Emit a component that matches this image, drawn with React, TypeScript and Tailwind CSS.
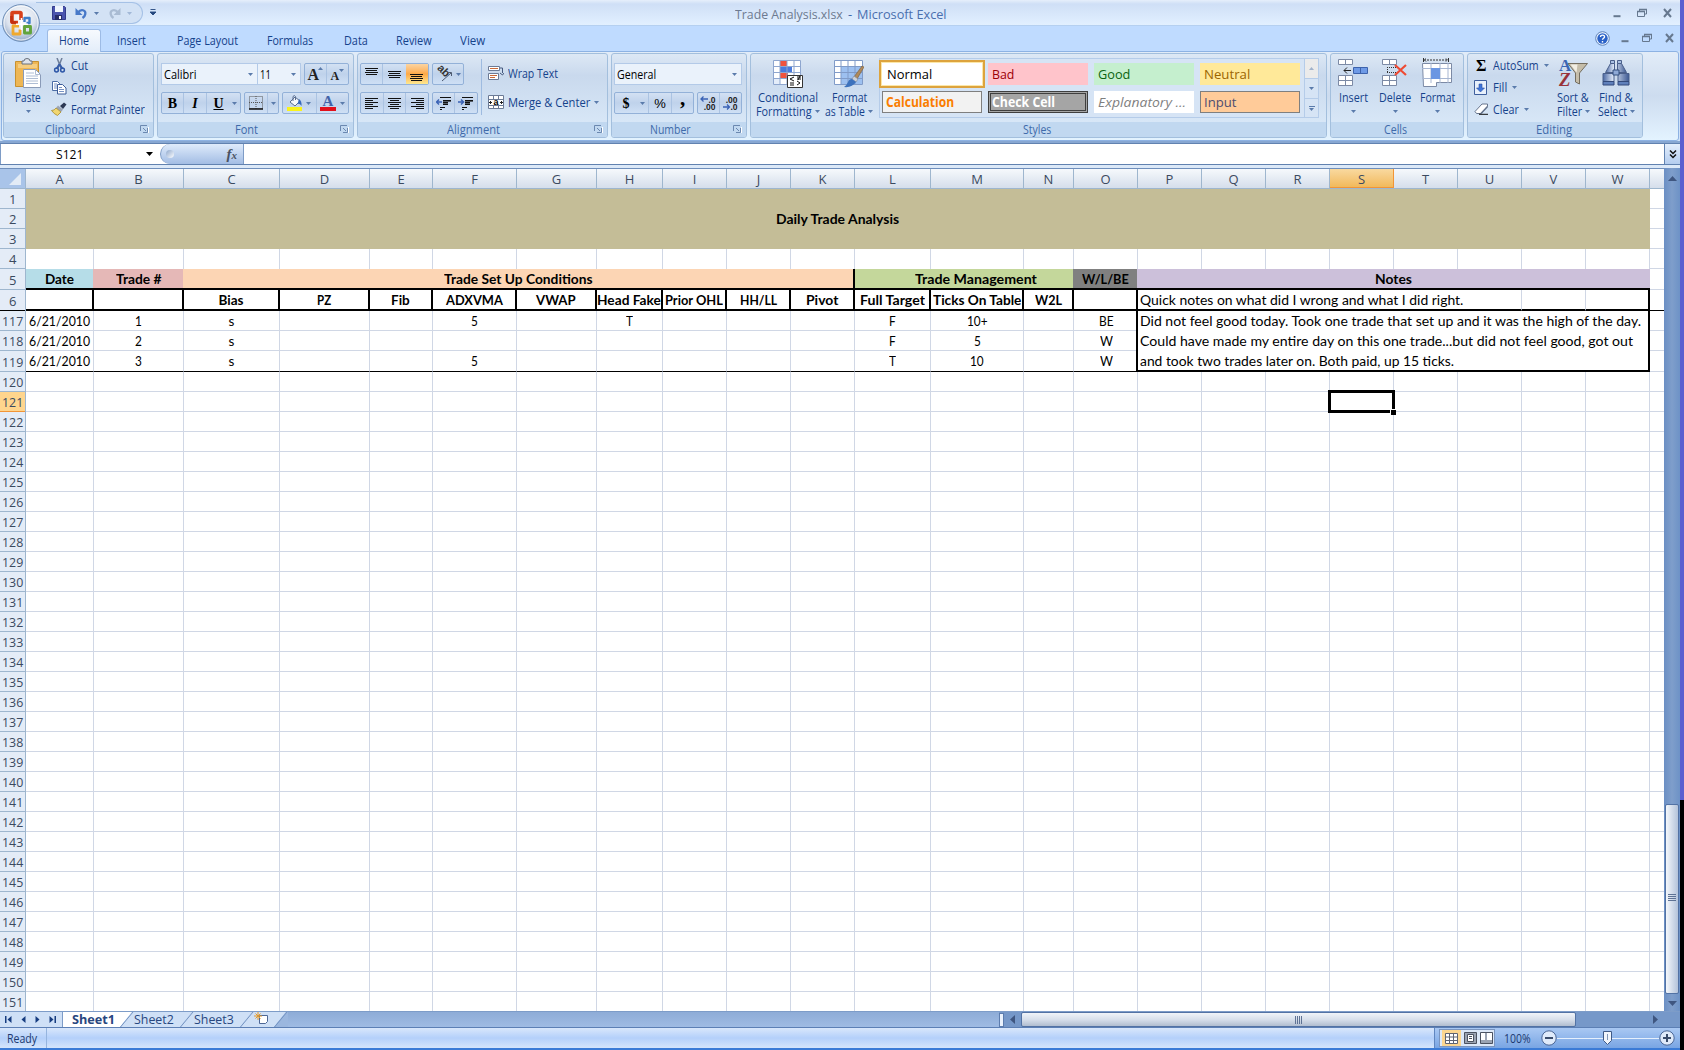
import { useLayoutEffect, useRef, useState } from "react";
import type { ReactNode } from "react";

/* text squeezed or stretched to a known width */
const Fit = ({ w, className = "", children }: { w: number; className?: string; children: string }) => {
  const ref = useRef<HTMLSpanElement>(null);
  const [scale, setScale] = useState(1);

  useLayoutEffect(() => {
    if (ref.current) setScale(w / ref.current.offsetWidth);
  }, [w, children]);

  return (
    <span className={`inline-block shrink-0 whitespace-pre text-left ${className}`} style={{ width: w }}>
      <span ref={ref} className="inline-block origin-left" style={{ transform: `scaleX(${scale})` }}>
        {children}
      </span>
    </span>
  );
};

const Caret = ({ className = "" }: { className?: string }) => (
  <svg width="5" height="3" viewBox="0 0 5 3" className={`shrink-0 ${className}`}>
    <path d="M0 0h5L2.5 3z" fill="#5a7bab" />
  </svg>
);

const Launcher = () => (
  <svg width="9" height="8" viewBox="0 0 9 8" className="absolute right-[4px] top-[3px]">
    <path d="M.5 6V.5H7" fill="none" stroke="#6b88b0" />
    <path d="M3 3l3 3M7.5 3v4.5H3" fill="none" stroke="#6b88b0" />
    <path d="M8.5 2v6" stroke="#fff" />
  </svg>
);

const Group = ({ title, titleW, className, launcher, children }: { title: string; titleW: number; className: string; launcher?: boolean; children: ReactNode }) => (
  <div className={`flex h-[85px] shrink-0 flex-col overflow-hidden rounded-[3px] border border-[#a3bfdd] bg-linear-to-b from-[#dde8f5] from-0% via-[#c9d9ed] via-26% to-[#dcebfa] ${className}`}>
    <div className="h-[68px]">{children}</div>
    <div className={`relative flex h-[15px] items-center justify-center bg-[#c1d8f0] ${launcher ? "pr-[18px]" : "pr-[3px]"}`}>
      <Fit w={titleW} className="text-[#3e6aaa]">{title}</Fit>
      {launcher && <Launcher />}
    </div>
  </div>
);

const box = "flex h-[22px] shrink-0 items-center rounded-[2px] border border-[#93b1d8] bg-linear-to-b from-[#d3e1f3] via-[#bfd2eb] to-[#cfe0f5]";
const slot = "flex h-full items-center justify-center border-[#abc3e2]";

const Big = ({ className, lines, widths, children }: { className: string; lines: string[]; widths: number[]; children: ReactNode }) => (
  <div className={`flex shrink-0 flex-col items-center text-[#15428b] ${className}`}>
    <div className="flex h-9 items-center justify-center">{children}</div>
    <Fit w={widths[0]} className="h-[13px] leading-[13px]">{lines[0]}</Fit>
    <div className="mt-px flex h-[13px] items-center gap-[3px]">
      {lines[1] && <Fit w={widths[1]} className="leading-[13px]">{lines[1]}</Fit>}
      <Caret />
    </div>
  </div>
);

/* horizontal strokes for the alignment buttons */
const Lines = ({ rows, color = "#111" }: { rows: number[][]; color?: string }) => (
  <svg width="15" height="14" viewBox="0 0 15 14">
    {rows.map(([x, y, w], i) => (
      <rect key={i} x={x} y={y} width={w} height="1" fill={color} />
    ))}
  </svg>
);

const OfficeButton = () => (
  <svg width="40" height="40" viewBox="0 0 40 40" className="absolute left-px top-[3px] z-20">
    <defs>
      <radialGradient id="orb" cx=".5" cy=".35" r=".65">
        <stop offset="0" stopColor="#ffffff" />
        <stop offset=".6" stopColor="#dce3ee" />
        <stop offset="1" stopColor="#8fa6c6" />
      </radialGradient>
    </defs>
    <circle cx="20" cy="20" r="18.4" fill="url(#orb)" stroke="#6f8fb8" />
    <circle cx="20" cy="20" r="17" fill="none" stroke="#fff" opacity=".8" />
    <g fill="none" strokeLinejoin="round">
      <path d="M20 17v-6.500q0-1-1-1h-7q-1 0-1 1v8q0 1 1 1h5" stroke="#d8401b" strokeWidth="3.600" />
      <path d="M10.500 13v5.500q0 1 1 1h4" stroke="#c22f12" strokeWidth="2.600" />
      <path d="M23.500 19v-4h5v5h-3" stroke="#3f7fc9" strokeWidth="2.400" />
      <path d="M18 23h-6v8h7v-4.500" stroke="#f0a92d" strokeWidth="2.800" />
      <path d="M23.500 23.500h6v6.500h-6z" stroke="#61a43c" strokeWidth="2.900" />
    </g>
    <path d="M20.500 15v12M15 21.200h12" stroke="#fff" strokeWidth="1.500" />
  </svg>
);

const Undo = ({ color, flip }: { color: string; flip?: boolean }) => (
  <svg width="13" height="13" viewBox="0 0 13 13" className={flip ? "-scale-x-100" : ""}>
    <path d="M3 5.500C6 1.500 11 3 10.300 7 10 9 9 10 7.500 11" fill="none" stroke={color} strokeWidth="2.300" />
    <path d="M.5 1v7h7z" fill={color} />
  </svg>
);

const WindowButtons = ({ className, gap }: { className: string; gap: string }) => (
  <div className={`flex ${gap} ${className}`}>
    <svg width="8" height="12" viewBox="0 0 8 12"><path d="M.5 9.200h7" stroke="#66788f" strokeWidth="2" /></svg>
    <svg width="10" height="12" viewBox="0 0 10 12">
      <path d="M2.500 4V2.500h7V7H8M.5 4.500h7v5h-7z" fill="none" stroke="#66788f" />
      <path d="M0 4.500h8M2 2.500h8" stroke="#66788f" strokeWidth="1.500" />
    </svg>
    <svg width="9" height="12" viewBox="0 0 9 12"><path d="M1 2l7 8M8 2l-7 8" stroke="#66788f" strokeWidth="2" /></svg>
  </div>
);

const TitleBar = () => (
  <div className="flex h-[26px] shrink-0 border-b border-[#b5d0f0] bg-linear-to-b from-[#e6effb] from-0% via-[#cfdff6] via-16% to-[#e2f0ff]">
    <div className="ml-[36px] mt-[2px] flex h-[22px] w-[107px] items-center rounded-r-full border border-l-0 border-[#a5c1e6] bg-[#d3e2f5] pl-4">
      <svg width="14" height="14" viewBox="0 0 14 14">
        <path d="M.5.5h12l1 1v12H.5z" fill="#4a54ae" stroke="#333b8c" />
        <path d="M3 0h8v6H3z" fill="#eef4fd" />
        <path d="M3 9h7v5H3z" fill="#272d68" />
        <path d="M7 10h2v3H7z" fill="#fff" />
      </svg>
      <span className="ml-[9px] flex"><Undo color="#4778c8" /></span>
      <Caret className="ml-1.5" />
      <span className="ml-[9px] flex"><Undo color="#a9bbd3" flip /></span>
      <Caret className="ml-1.5 opacity-40" />
    </div>
    <svg width="6" height="7" viewBox="0 0 6 7" className="ml-[7px] mt-[9px]">
      <path d="M.5.5h5M0 3h6L3 6z" stroke="#24477e" fill="#24477e" strokeWidth=".9" />
    </svg>
    <div className="ml-[579px] flex gap-[5px] pt-[5px] text-[13px] leading-[19px]">
      <Fit w={108} className="text-[#6d7a90]">Trade Analysis.xlsx</Fit>
      <Fit w={4} className="text-[#3e6aaa]">-</Fit>
      <Fit w={90} className="text-[#4a6fae]">Microsoft Excel</Fit>
    </div>
    <WindowButtons className="ml-auto mr-[8px] mt-[7px]" gap="gap-[16px]" />
  </div>
);

const TabRow = () => (
  <div className="flex h-[25px] shrink-0 bg-[#bfdbff] text-[#15428b]">
    <div className="z-10 ml-[47px] mt-[3px] flex h-[23px] w-[54px] items-center justify-center rounded-t-[3px] border border-b-0 border-[#9dbbe5] bg-linear-to-b from-[#f7fafe] to-[#e3edf9] pb-[2px]">
      <Fit w={30}>Home</Fit>
    </div>
    <div className="flex items-center pt-[3px]">
      <Fit w={28.5} className="ml-[16px]">Insert</Fit>
      <Fit w={61} className="ml-[31px]">Page Layout</Fit>
      <Fit w={46} className="ml-[29px]">Formulas</Fit>
      <Fit w={23.500} className="ml-[31px]">Data</Fit>
      <Fit w={35.500} className="ml-[29px]">Review</Fit>
      <Fit w={25} className="ml-[28px]">View</Fit>
    </div>
    <svg width="15" height="15" viewBox="0 0 15 15" className="ml-auto mt-[5px]">
      <circle cx="7.500" cy="7.500" r="6.800" fill="#e8f2ff" stroke="#5f82b8" />
      <circle cx="7.500" cy="7.500" r="5.200" fill="#2b62c8" />
      <path d="M5.500 6c0-2.600 4.200-2.500 4 0-.1 1.300-2 1.300-2 2.700M7.500 10v1.400" fill="none" stroke="#fff" strokeWidth="1.400" />
    </svg>
    <WindowButtons className="ml-[11px] mr-[6px] mt-[6px]" gap="gap-[13px]" />
  </div>
);

const Clipboard = () => (
  <Group title="Clipboard" titleW={50} className="w-[151px]" launcher>
    <div className="flex h-full text-[#15428b]">
      <Big className="ml-[9px] w-[30px] pt-px" lines={["Paste"]} widths={[26]}>
        <svg width="28" height="31" viewBox="0 0 28 31">
          <path d="M1.500 3.500h23v25h-23z" fill="#eeb654" stroke="#c8912f" />
          <path d="M4 6h19v4H4z" fill="#f5cd80" />
          <path d="M8 6V3h2q0-2.500 3-2.500T16 3h2v3z" fill="#dfe3ea" stroke="#69717e" />
          <path d="M9.500 11.500h12l5 5v13h-17z" fill="#fff" stroke="#8a9bb8" />
          <path d="M21.500 11.500v5h5M12 15h8M12 18h12M12 20.500h12M12 23h12M12 25.500h12" fill="none" stroke="#aebdd4" />
        </svg>
      </Big>
      <div className="ml-[8px] flex flex-col pt-[1px]">
        <div className="flex h-[22px] items-center gap-[4px] pb-px">
          <svg width="16" height="16" viewBox="0 0 16 16">
            <path d="M6 0l4 10M11 0L7 10" stroke="#6f7f99" strokeWidth="1.500" />
            <path d="M8.500 6l3 5M8.500 6l-3 5" stroke="#3a5fa8" strokeWidth="2" />
            <circle cx="5.500" cy="12" r="1.900" fill="none" stroke="#2f58a8" strokeWidth="1.500" />
            <circle cx="11.500" cy="12" r="1.900" fill="none" stroke="#2f58a8" strokeWidth="1.500" />
          </svg>
          <Fit w={17}>Cut</Fit>
        </div>
        <div className="flex h-[21px] items-center gap-[4px]">
          <svg width="16" height="14" viewBox="0 0 16 14">
            <path d="M1.500.5h5l3 3v6h-8z" fill="#fff" stroke="#4b6ca5" />
            <path d="M6.500 3.500h5l3.500 3.500v6H6.500z" fill="#fff" stroke="#3c5c98" />
            <path d="M3 3h3M3 5h3M3 7h3M8 6.500h3M8 8.500h5M8 10.500h5" stroke="#7792c4" />
          </svg>
          <Fit w={25}>Copy</Fit>
        </div>
        <div className="flex h-[22px] items-center gap-[4px]">
          <svg width="16" height="14" viewBox="0 0 16 14">
            <path d="M9 4l4-3.500 2.500 2L12 7z" fill="#2d3954" />
            <path d="M7 3.500l5 4-2 2.500-5-4z" fill="#9ca5b5" />
            <path d="M5 6l5 4-3.500 3.500Q3 12 .5 8.500 3.500 8.500 5 6z" fill="#f1d671" stroke="#a68a2e" strokeWidth=".8" />
          </svg>
          <Fit w={74}>Format Painter</Fit>
        </div>
      </div>
    </div>
  </Group>
);

const FontGroup = () => (
  <Group title="Font" titleW={23} className="ml-[3px] w-[197px]" launcher>
    <div className="flex flex-col gap-[7px] pl-[3px] pt-[9px]">
      <div className="flex">
        <div className="flex h-[22px] w-[97px] items-center justify-between border border-[#b3cae8] bg-[#eaf2fb] pl-[2px] pr-1 text-black">
          <Fit w={33}>Calibri</Fit>
          <Caret />
        </div>
        <div className="flex h-[22px] w-[43px] items-center justify-between border border-l-0 border-[#b3cae8] bg-[#eaf2fb] pl-[2px] pr-1 text-black">
          <Fit w={11}>11</Fit>
          <Caret />
        </div>
        <div className={`${box} ml-[3px] w-[45px] font-bold text-[#222]`}>
          <div className={`${slot} w-[22px] border-r font-['Liberation_Serif'] text-[16px]`}>
            A<Caret className="-ml-px mb-3 rotate-180" />
          </div>
          <div className={`${slot} w-[22px] font-['Liberation_Serif'] text-[12px]`}>
            <span className="mt-1">A</span><Caret className="mb-2" />
          </div>
        </div>
      </div>
      <div className="flex font-['Liberation_Serif'] text-[14px] font-bold text-black">
        <div className={`${box} w-[80px]`}>
          <div className={`${slot} w-[22px] border-r`}>B</div>
          <div className={`${slot} w-[23px] border-r italic`}>I</div>
          <div className={`${slot} w-[23px] underline`}>U</div>
          <Caret className="ml-[2px]" />
        </div>
        <div className={`${box} ml-[3px] w-[35px]`}>
          <div className={`${slot} w-[23px] border-r`}>
            <svg width="14" height="14" viewBox="0 0 14 14">
              <path d="M.5.5h13v12H.5zM7 0v13M0 6.500h14" fill="none" stroke="#555" strokeDasharray="1 1" />
              <path d="M0 13h14" stroke="#111" strokeWidth="1.500" />
            </svg>
          </div>
          <Caret className="ml-[3px]" />
        </div>
        <div className={`${box} ml-[3px] w-[67px]`}>
          <div className={`${slot} w-[23px]`}>
            <svg width="16" height="16" viewBox="0 0 16 16">
              <path d="M0 12h15v4H0z" fill="#f9f31c" />
              <path d="M3 7l5-5 5 4-5 5z" fill="#f5f8fd" stroke="#5a6d8f" />
              <path d="M6 6V1.500q1.500-2 2.500 0V5" fill="none" stroke="#5a6d8f" />
              <path d="M12 4q3 2 2.500 7-2-3-4-2z" fill="#3769bb" />
            </svg>
          </div>
          <Caret />
          <div className={`${slot} ml-[5px] w-[22px] border-l`}>
            <svg width="16" height="16" viewBox="0 0 16 16" className="overflow-visible">
              <path d="M0 12h16v4H0z" fill="#e2101c" />
              <text x="8" y="10.500" textAnchor="middle" fontSize="15" fontWeight="bold" fontFamily="Liberation Serif" fill="#4363a8">A</text>
            </svg>
          </div>
          <Caret className="ml-[2px]" />
        </div>
      </div>
    </div>
  </Group>
);

const indent = [[4, 1, 11], [7, 4, 8], [7, 6, 5], [7, 8, 5], [4, 11, 5], [4, 13, 2]];

const Alignment = () => (
  <Group title="Alignment" titleW={53} className="ml-[3px] w-[251px]" launcher>
    <div className="flex pl-[2px]">
      <div className="flex flex-col gap-[7px] pt-[9px]">
        <div className="flex gap-[3px]">
          <div className={`${box} w-[69px]`}>
            <div className={`${slot} w-[23px] border-r`}><Lines rows={[[1, 1, 13], [2, 3, 11], [1, 5, 13], [2, 7, 11]]} /></div>
            <div className={`${slot} w-[23px]`}><Lines rows={[[1, 4, 13], [2, 6, 11], [1, 8, 13], [2, 10, 11]]} /></div>
            <div className={`${slot} w-[23px] bg-linear-to-b from-[#fbd4a0] via-[#fda945] to-[#fde88f]`}><Lines rows={[[1, 7, 13], [2, 9, 11], [1, 11, 13], [2, 13, 11]]} /></div>
          </div>
          <div className={`${box} w-[32px] gap-[3px] pl-1`}>
            <svg width="16" height="15" viewBox="0 0 16 15" className="overflow-visible">
              <text x="-2" y="6" transform="rotate(45 4 6)" fontSize="11" fontFamily="Liberation Sans" fontWeight="bold" fill="#333">ab</text>
              <path d="M5 14l9-8M11 5.500h3.500V9" fill="none" stroke="#4d5a70" />
            </svg>
            <Caret />
          </div>
        </div>
        <div className="flex gap-[3px]">
          <div className={`${box} w-[69px]`}>
            <div className={`${slot} w-[23px] border-r`}><Lines rows={[[1, 2, 13], [1, 4, 8], [1, 6, 13], [1, 8, 8], [1, 10, 13], [1, 12, 8]]} /></div>
            <div className={`${slot} w-[23px] border-r`}><Lines rows={[[1, 2, 13], [3, 4, 9], [1, 6, 13], [3, 8, 9], [1, 10, 13], [3, 12, 9]]} /></div>
            <div className={`${slot} w-[22px]`}><Lines rows={[[1, 2, 13], [6, 4, 8], [1, 6, 13], [6, 8, 8], [1, 10, 13], [6, 12, 8]]} /></div>
          </div>
          <div className={`${box} w-[46px]`}>
            {[0, 1].map((i) => (
              <div key={i} className={`${slot} w-[22px] ${i ? "" : "border-r"}`}>
                <svg width="16" height="15" viewBox="0 0 16 15">
                  {indent.map(([x, y, w], k) => (
                    <rect key={k} x={x} y={y} width={w} height={y === 4 || y === 6 ? 1.600 : 1} fill="#111" />
                  ))}
                  <path d={i ? "M0 6h5M3 3.500l2.500 2.500L3 8.500" : "M6 6H1M3 3.500L.5 6 3 8.500"} fill="none" stroke="#3a62b5" strokeWidth="1.500" />
                </svg>
              </div>
            ))}
          </div>
        </div>
      </div>
      <div className="ml-[3px] mt-[5px] h-[56px] w-px bg-[#9ebbe0]" />
      <div className="ml-[6px] flex flex-col gap-[7px] pt-[8px] text-[#15428b]">
        <div className="flex h-[22px] items-center gap-[4px]">
          <svg width="16" height="16" viewBox="0 0 16 16">
            <path d="M.5 1.500h11v4H.5zM.5 8.500h10v6H.5z" fill="#fff" stroke="#6c7b96" />
            <path d="M2 3.500h8M2 10.500h7M2 12.500h5" stroke="#c96a3a" />
            <path d="M12 3h2.500v5M12 8l2.500 2 1.500-2" fill="none" stroke="#45597e" />
          </svg>
          <Fit w={50}>Wrap Text</Fit>
        </div>
        <div className="flex h-[22px] items-center gap-[4px]">
          <svg width="16" height="15" viewBox="0 0 16 15">
            <path d="M.5.5h15v13H.5zM0 4.500h16M0 10.500h16M5.500 0v4M10.500 0v4M5.500 11v3M10.500 11v3" fill="#fff" stroke="#6c7b96" />
            <path d="M1 7.500h3M12 7.500h3M2.500 6v3M13.500 6v3" stroke="#222" />
            <text x="8" y="10" textAnchor="middle" fontSize="9" fontWeight="bold" fontFamily="Liberation Sans">a</text>
          </svg>
          <Fit w={82}>Merge &amp; Center</Fit>
          <Caret />
        </div>
      </div>
    </div>
  </Group>
);

const Decimal = ({ top, bottom, arrowTop }: { top: string; bottom: string; arrowTop?: boolean }) => (
  <svg width="16" height="16" viewBox="0 0 16 16">
    <g fontFamily="Liberation Sans" fontSize="8.500" fontWeight="bold" fill="#222" textAnchor="end">
      <text x="15.500" y="7.500">{top}</text>
      <text x="15.500" y="15">{bottom}</text>
    </g>
    <path d={arrowTop ? "M8 4H1M3.500 1.500L1 4l2.500 2.500" : "M1 12h6M5 9.500L7.500 12 5 14.500"} fill="none" stroke="#3a62b5" strokeWidth="1.300" />
  </svg>
);

const NumberGroup = () => (
  <Group title="Number" titleW={41} className="ml-[3px] w-[136px]" launcher>
    <div className="flex flex-col gap-[7px] pl-[2px] pt-[9px]">
      <div className="flex h-[22px] w-[128px] items-center justify-between border border-[#b3cae8] bg-[#eaf2fb] pl-[2px] pr-1 text-black">
        <Fit w={39}>General</Fit>
        <Caret />
      </div>
      <div className="flex gap-[3px]">
        <div className={`${box} w-[80px] text-black`}>
          <span className="w-[22px] text-center font-['Liberation_Serif'] text-[14px] font-bold">$</span>
          <Caret className="ml-[3px]" />
          <div className={`${slot} ml-[3px] w-[24px] border-x font-['Liberation_Sans'] text-[13px]`}>%</div>
          <span className="mb-[9px] ml-2 font-['Liberation_Serif'] text-[21px] font-bold leading-none">,</span>
        </div>
        <div className={`${box} w-[45px]`}>
          <div className={`${slot} w-[22px] border-r`}><Decimal top=".0" bottom=".00" arrowTop /></div>
          <div className={`${slot} w-[22px]`}><Decimal top=".00" bottom=".0" /></div>
        </div>
      </div>
    </div>
  </Group>
);

const Tile = ({ name, w, className }: { name: string; w: number; className: string }) => (
  <div className={`flex h-[22px] w-[100px] items-center text-[13.500px] ${className}`}>
    <Fit w={w}>{name}</Fit>
  </div>
);

const Styles = () => (
  <Group title="Styles" titleW={28} className="ml-[3px] w-[577px]">
    <div className="flex">
      <Big className="ml-[3px] w-[68px] pt-px" lines={["Conditional", "Formatting"]} widths={[60, 56]}>
        <svg width="30" height="29" viewBox="0 0 30 29">
          <path d="M.5 1.500h27v24H.5z" fill="#fff" />
          <path d="M7 1h7v7H7zM7 14h8v6H7z" fill="#f0533d" />
          <path d="M7 8h12v6H7z" fill="#4a7bdc" />
          <path d="M0 20h7v6H0z" fill="#e4edfa" />
          <path d="M.5 1.500h27v24H.5zM7 1v25M14 1v25M21 1v25M0 7.500h28M0 13.500h28M0 19.500h28" fill="none" stroke="#8ea6cf" />
          <path d="M14.500 16.500h15v12h-15z" fill="#fff" stroke="#333" />
          <path d="M21 18l-4 2 4 2M17 24h4M17 26h4M24 18h4M24 20h4M27 17l-2 4M24 22l3 2-3 2" fill="none" stroke="#111" />
        </svg>
      </Big>
      <Big className="ml-px w-[52px] pt-px" lines={["Format", "as Table"]} widths={[35, 40]}>
        <svg width="30" height="29" viewBox="0 0 30 29">
          <path d="M.5 1.500h28v24H.5z" fill="#fff" />
          <path d="M7 7h21v19H7z" fill="#9dc0f0" />
          <path d="M.5 1.500h28v24H.5zM7 1v25M14 1v25M21 1v25M0 7.500h28M0 13.500h28M0 19.500h28" fill="none" stroke="#809bc8" />
          <path d="M28 7l2 1-7 12-3-2z" fill="#b08a5c" stroke="#7b5c38" strokeWidth=".6" />
          <path d="M20 17l4 3-2 3-4-3z" fill="#ccd1da" stroke="#7d8696" strokeWidth=".6" />
          <path d="M18 20l4 3q-4 6-12 5 3-2 4-5 1-3 4-3z" fill="#3d72bd" />
        </svg>
      </Big>
      <div className="ml-[4px] mt-[4px] flex h-[60px] w-[440px] justify-between border border-[#b5cce9] bg-[#d6e4f5]">
        <div className="grid grid-cols-4 content-start gap-x-[6px] gap-y-[6px] pl-[2px] pt-[4px]">
          <Tile name="Normal" w={45} className="bg-white pl-[5px] text-black outline-2 outline-offset-1 outline-[#dda33d] ring-[3px] ring-[#fce7a8]" />
          <Tile name="Bad" w={22} className="bg-[#ffc4cb] pl-[4px] text-[#9c0006]" />
          <Tile name="Good" w={32} className="bg-[#c5efce] pl-[4px] text-[#0a6410]" />
          <Tile name="Neutral" w={46} className="bg-[#ffe999] pl-[4px] text-[#9c6500]" />
          <Tile name="Calculation" w={68} className="border border-[#7f7f7f] bg-[#f2f2f2] pl-[3px] font-bold text-[#fa7d00]" />
          <Tile name="Check Cell" w={63} className="border-[3px] border-double border-[#3f3f3f] bg-[#a5a5a5] pl-px font-bold text-white" />
          <Tile name="Explanatory ..." w={88} className="bg-white pl-[4px] italic text-[#7f7f7f]" />
          <Tile name="Input" w={32} className="border border-[#7f7f7f] bg-[#ffcb99] pl-[3px] text-[#4d4d70]" />
        </div>
        <div className="flex w-[14px] flex-col border-l border-[#b5cce9] text-center">
          <div className="flex h-5 items-center justify-center border-b border-[#b5cce9] bg-[#ebebeb]"><Caret className="rotate-180 opacity-50" /></div>
          <div className="flex h-5 items-center justify-center border-b border-[#b5cce9]"><Caret /></div>
          <div className="flex h-[18px] flex-col items-center justify-center gap-px"><i className="h-px w-[6px] bg-[#5a7bab]" /><Caret /></div>
        </div>
      </div>
    </div>
  </Group>
);

const cellsGrid = "M.5.500h14v5H.5zM7.500.500v5M.5 16.500h14v10H.5zM7.500 16.500v10M.5 21.500h14";

const Cells = () => (
  <Group title="Cells" titleW={23} className="ml-[3px] w-[134px]">
    <div className="flex pl-[3px] pt-px">
      <Big className="w-[38px]" lines={["Insert"]} widths={[28.700]}>
        <svg width="30" height="28" viewBox="0 0 30 28">
          <path d={cellsGrid} fill="#fff" stroke="#7c8aa5" />
          <path d="M15.500 8.500h14v6h-14zM22.500 8.500v6" fill="#6e9ae6" stroke="#3d63ac" />
          <path d="M13 11.500H6M9 8.500l-3 3 3 3" fill="none" stroke="#222" />
        </svg>
      </Big>
      <Big className="ml-[2px] w-[42px]" lines={["Delete"]} widths={[32]}>
        <svg width="26" height="28" viewBox="0 0 26 28">
          <path d={cellsGrid} fill="#fff" stroke="#7c8aa5" />
          <path d="M5 8.500h10M5 13.500h10M5.500 8v6" stroke="#333" strokeDasharray="1 1" />
          <path d="M13 6l11 10M24 6L13 16" stroke="#ee4b34" strokeWidth="2.200" />
        </svg>
      </Big>
      <Big className="w-[42px]" lines={["Format"]} widths={[35]}>
        <svg width="30" height="30" viewBox="0 0 30 30">
          <path d="M1.500 0v4M26.500 0v4" stroke="#333" />
          <path d="M2 2h24M4 .5L2.500 2 4 3.500M24 .5L25.500 2 24 3.500" fill="none" stroke="#333" strokeDasharray="2 1" />
          <path d="M.5 5.500h29v19h-15v4h-13z" fill="#fff" stroke="#7c8aa5" />
          <path d="M9 5v20M18 5v20M26 5v20M0 10.500h29M0 20.500h29" stroke="#a8b7d2" />
          <path d="M9 10h9v11H9z" fill="#6b96e2" />
        </svg>
      </Big>
    </div>
  </Group>
);

const Editing = () => (
  <Group title="Editing" titleW={36} className="ml-[3px] w-[176px]">
    <div className="flex">
      <div className="ml-[6px] flex w-[80px] flex-col pt-px text-[#15428b]">
        <div className="flex h-[22px] items-center pb-px">
          <span className="w-[19px] pl-[2px] font-['Liberation_Serif'] text-[16px] font-bold leading-none text-black">Σ</span>
          <Fit w={46}>AutoSum</Fit>
          <Caret className="ml-[5px]" />
        </div>
        <div className="flex h-[21px] items-center">
          <svg width="13" height="15" viewBox="0 0 13 15" className="mr-[6px]">
            <path d="M.5.5h12v14H.5z" fill="#e8f0fb" stroke="#3f5f9d" />
            <path d="M5 4h3v4h2.500l-4 4-4-4H5z" fill="#3f74d8" stroke="#2a52a5" strokeWidth=".6" />
          </svg>
          <Fit w={14}>Fill</Fit>
          <Caret className="ml-[5px]" />
        </div>
        <div className="flex h-[22px] items-center">
          <svg width="15" height="12" viewBox="0 0 15 12" className="mr-[4px]">
            <path d="M1 8.500L8 1h5.500v2.500L7 10.500H2.500z" fill="#fff" stroke="#66748d" />
            <path d="M7 10.500L13.500 3.500" stroke="#66748d" strokeWidth="1.500" />
            <path d="M5 11.300h9" stroke="#111" />
          </svg>
          <Fit w={26}>Clear</Fit>
          <Caret className="ml-[5px]" />
        </div>
      </div>
      <Big className="w-[38px] pt-px" lines={["Sort &", "Filter"]} widths={[32, 25]}>
        <svg width="30" height="30" viewBox="0 0 30 30" className="overflow-visible">
          <path d="M10 5.500h19.500L21.500 15v11l-4-2v-9z" fill="#c5bda9" stroke="#746e60" />
          <path d="M12.500 6.500h7l-1 8z" fill="#f2eee3" />
          <text x="1" y="13" fontFamily="Liberation Serif" fontWeight="bold" fontSize="17" fill="#3c67b4">A</text>
          <text x="1" y="28" fontFamily="Liberation Serif" fontWeight="bold" fontStyle="italic" fontSize="19" fill="#99323a">Z</text>
        </svg>
      </Big>
      <Big className="ml-[4px] w-[40px] pt-px" lines={["Find &", "Select"]} widths={[34, 29]}>
        <svg width="28" height="28" viewBox="0 0 28 28">
          <defs>
            <linearGradient id="barrel">
              <stop offset="0" stopColor="#4a68a3" />
              <stop offset=".4" stopColor="#dfe9f8" />
              <stop offset="1" stopColor="#3c5892" />
            </linearGradient>
          </defs>
          <path d="M8.500 4.500h4v9h-9zM19.500 4.500h-4v9h9z" fill="url(#barrel)" stroke="#4b608b" />
          <path d="M1 14.500h11v8H1zM16 14.500h11v8H16z" fill="url(#barrel)" stroke="#4b608b" />
          <path d="M1 22.500h11v3.500H1zM16 22.500h11v3.500H16z" fill="#5f80bb" stroke="#32497a" />
          <path d="M8.500 1.500h4v3h-4zM15.500 1.500h4v3h-4z" fill="#aac0e2" stroke="#4b608b" />
          <path d="M11 11h6v5h-6z" fill="#8ea9d6" stroke="#34507f" />
        </svg>
      </Big>
    </div>
  </Group>
);

const FormulaBar = () => (
  <div className="flex h-[22px] shrink-0 border-y border-[#6182b0] bg-white">
    <div className="flex w-[160px] items-center border-l border-[#7e9cc6] pl-[55px] text-[13px] text-black">
      <Fit w={27}>S121</Fit>
      <svg width="7" height="4" viewBox="0 0 7 4" className="ml-[63px]"><path d="M0 0h7L3.500 4z" /></svg>
    </div>
    <div className="flex w-[84px] items-center justify-between rounded-l-full border-l border-r border-[#7e9cc6] bg-linear-to-b from-[#dfebfb] to-[#a3bde4] pl-[5px] pr-[6px]">
      <i className="size-2 rounded-full bg-linear-to-br from-[#8fa8cc] to-white" />
      <span className="font-['Liberation_Serif'] text-[15px] font-bold italic leading-none text-[#4a5262]">f<span className="text-[11px]">x</span></span>
    </div>
    <div className="ml-auto flex w-[16px] items-center justify-center border-l border-[#6182b0] bg-linear-to-b from-[#e3eefc] to-[#b4cdef]">
      <svg width="8" height="9" viewBox="0 0 8 9"><path d="M1 .5l3 3 3-3M1 4.500l3 3 3-3" fill="none" stroke="#111" strokeWidth="1.500" /></svg>
    </div>
  </div>
);

const columns: [string, string][] = [
  ["A", "w-[68px]"], ["B", "w-[90px]"], ["C", "w-[96px]"], ["D", "w-[90px]"], ["E", "w-[63px]"], ["F", "w-[84px]"],
  ["G", "w-[80px]"], ["H", "w-[66px]"], ["I", "w-[64px]"], ["J", "w-[64px]"], ["K", "w-[64px]"], ["L", "w-[76px]"],
  ["M", "w-[93px]"], ["N", "w-[50px]"], ["O", "w-[64px]"], ["P", "w-[64px]"], ["Q", "w-[64px]"], ["R", "w-[64px]"],
  ["S", "w-[64px]"], ["T", "w-[64px]"], ["U", "w-[64px]"], ["V", "w-[64px]"], ["W", "w-[64px]"],
];

const tall = [5, 6, 119];
const rowNumbers = [1, 2, 3, 4, 5, 6, ...Array.from({ length: 35 }, (_, i) => 117 + i)];

const trades: Record<string, string>[] = [
  { A: "6/21/2010", B: "1", C: "s", F: "5", H: "T", L: "F", M: "10+", O: "BE" },
  { A: "6/21/2010", B: "2", C: "s", L: "F", M: "5", O: "W" },
  { A: "6/21/2010", B: "3", C: "s", F: "5", L: "T", M: "10", O: "W" },
];

const subHeads: Record<string, [string, number]> = {
  C: ["Bias", 25], D: ["PZ", 14.500], E: ["Fib", 19], F: ["ADXVMA", 57], G: ["VWAP", 40], H: ["Head Fake", 64], I: ["Prior OHL", 58],
  J: ["HH/LL", 37], K: ["Pivot", 32], L: ["Full Target", 65], M: ["Ticks On Table", 88], N: ["W2L", 27],
};

const cellW: Record<string, number> = { "6/21/2010": 61, "10+": 21, "10": 14, BE: 15, W: 13, "1": 7, "2": 7, "3": 7, "5": 7, s: 6, T: 7, F: 7 };

const EmptyRow = () => (
  <div className="flex h-5 shrink-0">
    {columns.map(([c, w]) => (
      <div key={c} className={`${w} shrink-0 border-b border-r border-[#d0d7e5]`} />
    ))}
    <div className="grow border-b border-[#d0d7e5]" />
  </div>
);

const Sheet = () => (
  <div className="flex h-[823px] overflow-hidden font-['Lato',sans-serif] text-[13.500px] text-black">
    <div className="flex w-[26px] shrink-0 flex-col border-r border-[#9eb6ce] bg-[#e4ecf7] font-['Open_Sans',sans-serif] text-[13px] text-[#3b4a60]">
      {rowNumbers.map((n) => (
        <div
          key={n}
          className={`flex shrink-0 items-center justify-center border-b pt-[2px] ${tall.includes(n) ? "h-[21px]" : "h-5"} ${n === 121 ? "border-[#f29536] bg-[#ffd58d]" : n === 6 ? "border-black" : "border-[#9eb6ce]"}`}
        >
          <Fit w={String(n).length * 7}>{String(n)}</Fit>
        </div>
      ))}
    </div>
    <div className="relative flex w-[1638px] shrink-0 flex-col bg-white">
      <div className="flex h-[60px] shrink-0">
        <div className="flex w-[1624px] items-center justify-center bg-[#c4bd97] pr-[2px] font-bold">
          <Fit w={123}>Daily Trade Analysis</Fit>
        </div>
        <div className="grow">
          {[1, 2, 3].map((r) => <div key={r} className="h-5 border-b border-[#d0d7e5]" />)}
        </div>
      </div>
      <div className="flex h-5 shrink-0">
        {columns.map(([c, w]) => (
          <div key={c} className={`${w} shrink-0 border-r border-[#d0d7e5]`} />
        ))}
        <div className="grow border-b border-[#d0d7e5]" />
      </div>
      <div className="flex h-[21px] shrink-0 font-bold">
        <div className="flex w-[67px] items-center justify-center border-b-2 border-black bg-[#b6dde8] pt-[2px]"><Fit w={29}>Date</Fit></div>
        <div className="flex w-[90px] items-center justify-center border-b-2 border-black bg-[#e5b8b7] pl-px pt-[2px]"><Fit w={46}>Trade #</Fit></div>
        <div className="flex w-[670px] items-center justify-center border-b-2 border-black bg-[#fcd5b4] pt-[2px]"><Fit w={149}>Trade Set Up Conditions</Fit></div>
        <div className="flex w-[220px] items-center justify-center border-b-2 border-l-2 border-black bg-[#c4d79b] pl-6 pt-[2px]"><Fit w={122}>Trade Management</Fit></div>
        <div className="flex w-[64px] items-center justify-center border-b-2 border-black bg-[#808080] pt-[2px]"><Fit w={47}>W/L/BE</Fit></div>
        <div className="flex w-[513px] items-center justify-center border-b-2 border-black bg-[#ccc0da] pt-[2px]"><Fit w={37}>Notes</Fit></div>
        <div className="grow border-b border-[#d0d7e5]" />
      </div>
      <div className="flex h-[21px] shrink-0 font-bold">
        {columns.slice(0, 15).map(([c, w]) => (
          <div key={c} className={`${w} flex shrink-0 items-center justify-center border-b-2 border-r-2 border-black pt-[2px]`}>
            {subHeads[c] && <Fit w={subHeads[c][1]}>{subHeads[c][0]}</Fit>}
          </div>
        ))}
        <div className="flex w-[384px] items-center border-b-2 border-r border-b-black border-r-[#d0d7e5] pl-[2px] pt-[2px] font-normal">
          <Fit w={323}>Quick notes on what did I wrong and what I did right.</Fit>
        </div>
        <div className="w-[64px] border-b-2 border-r border-b-black border-r-[#d0d7e5]" />
        <div className="w-[64px] border-b-2 border-r-2 border-black" />
        <div className="grow border-b border-black" />
      </div>
      <div className="flex h-[61px] shrink-0">
        <div className="w-[1110px]">
          {trades.map((t, i) => (
            <div key={i} className={`flex ${i === 2 ? "h-[21px]" : "h-5"}`}>
              {columns.slice(0, 15).map(([c, w]) => (
                <div key={c} className={`${w} flex shrink-0 items-center justify-center border-b border-r-[#d0d7e5] pt-px ${c === "O" ? "" : "border-r"} ${i === 2 ? "border-b-black" : "border-b-[#d0d7e5]"}`}>
                  {t[c] && <Fit w={cellW[t[c]]}>{t[c]}</Fit>}
                </div>
              ))}
            </div>
          ))}
        </div>
        <div className="flex w-[514px] flex-col border-x-2 border-b-2 border-black pl-[2px] leading-5">
          <Fit w={501}>Did not feel good today. Took one trade that set up and it was the high of the day.</Fit>
          <Fit w={493}>Could have made my entire day on this one trade...but did not feel good, got out</Fit>
          <Fit w={314}>and took two trades later on. Both paid, up 15 ticks.</Fit>
        </div>
        <div className="grow">
          {[1, 2, 3].map((r) => <div key={r} className={`border-b border-[#d0d7e5] ${r === 3 ? "h-[21px]" : "h-5"}`} />)}
        </div>
      </div>
      {rowNumbers.slice(9).map((n) => <EmptyRow key={n} />)}
      {/* active cell */}
      <div className="absolute left-[1302px] top-[201px] h-[23px] w-[67px] border-[3px] border-black">
        <i className="absolute -bottom-[5px] -right-[4px] size-[6px] border-l border-t border-white bg-black" />
      </div>
    </div>
  </div>
);

const ColumnHeads = () => (
  <div className="flex h-[21px] shrink-0 border-b border-t border-b-[#9eb6ce] border-t-[#6f8fbc] bg-linear-to-b from-[#f6f9fc] to-[#d5deeb] text-[13px] text-[#3b4a60]">
    <div className="flex w-[26px] items-end justify-end border-r border-[#9eb6ce] bg-[#a9c4e9] pb-[3px] pr-1">
      <svg width="12" height="12" viewBox="0 0 12 12"><path d="M12 0v12H0z" fill="#e2ebf6" /></svg>
    </div>
    {columns.map(([c, w]) => (
      <div key={c} className={`${w} flex shrink-0 items-center justify-center border-r pt-[2px] ${c === "S" ? "border-b border-[#f29536] bg-linear-to-b from-[#f9d99f] to-[#f1b95a]" : "border-[#9eb6ce]"}`}>
        {c}
      </div>
    ))}
  </div>
);

const VerticalScroll = () => (
  <div className="flex w-4 shrink-0 flex-col items-center bg-linear-to-r from-[#6b8fc4] via-[#7f9ecb] to-[#6d92c6]">
    <svg width="9" height="5" viewBox="0 0 9 5" className="mt-[8px] shrink-0"><path d="M0 5h9L4.500 0z" fill="#3f5680" /></svg>
    <div className="mt-[623px] flex h-[190px] w-[14px] shrink-0 flex-col items-center justify-center gap-px rounded-[2px] border border-[#5272a4] bg-linear-to-r from-[#f4f7fb] to-[#b4c3da] pb-[4px]">
      {[1, 2, 3, 4].map((n) => <i key={n} className="h-px w-2 bg-[#5e7294]" />)}
    </div>
    <svg width="9" height="5" viewBox="0 0 9 5" className="mt-[7px] shrink-0"><path d="M0 0h9L4.500 5z" fill="#3f5680" /></svg>
  </div>
);

const Slant = ({ left, right }: { left: string; right: string }) => (
  <svg width="15" height="15" viewBox="0 0 15 15" className="shrink-0">
    <path d="M0 0h13L1 15H0z" fill={left} />
    <path d="M15 0h-2L1 15h14z" fill={right} />
    <path d="M14 0L1.500 15" stroke="#7393c2" />
  </svg>
);

const SheetTabs = () => (
  <div className="flex h-[16px] shrink-0 border-t border-[#7d9cc8] bg-[#9bb7df] text-[13px] leading-[15px] text-[#28477f]">
    <div className="flex w-[63px] items-center gap-[9px] border-r border-[#7d9cc8] bg-[#cfe0f6] pl-[5px]">
      <svg width="7" height="7" viewBox="0 0 7 7"><path d="M0 0h1.500v7H0zM6.500 0v7L2.500 3.500z" fill="#163c80" /></svg>
      <svg width="5" height="7" viewBox="0 0 5 7"><path d="M4.500 0v7L.5 3.500z" fill="#163c80" /></svg>
      <svg width="5" height="7" viewBox="0 0 5 7"><path d="M.5 0v7l4-3.500z" fill="#163c80" /></svg>
      <svg width="7" height="7" viewBox="0 0 7 7"><path d="M5.500 0H7v7H5.500zM.5 0v7l4-3.500z" fill="#163c80" /></svg>
    </div>
    <div className="bg-white pl-[9px] font-bold"><Fit w={43}>Sheet1</Fit></div>
    <div className="w-[4px] bg-white" />
    <Slant left="#fff" right="#cfe0f6" />
    <div className="bg-[#cfe0f6]"><Fit w={40}>Sheet2</Fit></div>
    <div className="w-[5px] bg-[#cfe0f6]" />
    <Slant left="#cfe0f6" right="#cfe0f6" />
    <div className="bg-[#cfe0f6]"><Fit w={40}>Sheet3</Fit></div>
    <div className="w-[5px] bg-[#cfe0f6]" />
    <Slant left="#cfe0f6" right="#cfe0f6" />
    <div className="w-[19px] bg-[#cfe0f6]">
      <svg width="15" height="13" viewBox="0 0 15 13">
        <path d="M5.500 3.500h8v6l-2 2h-6z" fill="#fff" stroke="#4d6796" />
        <path d="M4 0v8M0 4h8M1.500 1.500l5 5M6.500 1.500l-5 5" stroke="#e39a2d" />
      </svg>
    </div>
    <Slant left="#cfe0f6" right="#9bb7df" />
    <div className="grow bg-linear-to-b from-[#8eacd7] to-[#9fbbe3]" />
    <div className="flex w-[681px] shrink-0 items-center bg-[#7698c9]">
      <div className="h-[14px] w-[5px] border border-[#5c7cae] bg-[#eaf2fd]" />
      <svg width="5" height="9" viewBox="0 0 5 9" className="ml-[6px]"><path d="M5 0v9L0 4.500z" fill="#3f5680" /></svg>
      <div className="ml-[6px] flex h-[15px] w-[555px] items-center justify-center gap-px rounded-[2px] border border-[#5272a4] bg-linear-to-b from-[#f0f4f9] via-[#d7dfeb] to-[#b1bdcf]">
        {[1, 2, 3, 4].map((n) => <i key={n} className="h-2 w-px bg-[#5e7294]" />)}
      </div>
      <svg width="5" height="9" viewBox="0 0 5 9" className="ml-[77px]"><path d="M0 0v9l5-4.500z" fill="#3f5680" /></svg>
    </div>
  </div>
);

const Zoom = ({ plus }: { plus?: boolean }) => (
  <svg width="16" height="16" viewBox="0 0 16 16" className="shrink-0">
    <circle cx="8" cy="8" r="7.200" fill="#dfeafa" stroke="#4c6796" />
    <path d={plus ? "M4 8h8M8 4v8" : "M4 8h8"} stroke="#3a4c6b" strokeWidth="2" />
  </svg>
);

const StatusBar = () => (
  <div className="flex h-[23px] shrink-0 border-b-2 border-t border-b-[#3b7bd6] border-t-[#5c7fb5] bg-linear-to-b from-[#d9e7fb] via-[#b4d0fa] to-[#d5e5fb] text-[#1c3a70]">
    <div className="flex w-[47px] items-center border-r border-[#95b4de] pl-[7px]"><Fit w={30}>Ready</Fit></div>
    <div className="ml-auto flex w-[246px] items-center border-l border-[#5f86c0] bg-linear-to-b from-[#a9c8f3] to-[#79a5e3]">
      <div className="ml-[4px] flex h-[18px] w-[56px] items-center justify-around border border-[#7a95bf] bg-[#dce8f8]">
        <span className="flex h-full w-[19px] items-center justify-center bg-[#fbd690]">
          <svg width="13" height="11" viewBox="0 0 13 11"><path d="M.5.500h12v10H.5zM4.500 0v11M8.500 0v11M0 4h13M0 7.500h13" fill="#fff" stroke="#5e6472" /></svg>
        </span>
        <svg width="13" height="12" viewBox="0 0 13 12"><path d="M.5.500h12v11H.5z" fill="#9aa3b2" stroke="#4b5260" /><path d="M3.500 2.500h6v7h-6z" fill="#fff" stroke="#4b5260" /><path d="M5 4.500h3M5 6.500h3" stroke="#4b5260" /></svg>
        <svg width="13" height="12" viewBox="0 0 13 12"><path d="M.5.500h12v11H.5z" fill="#9aa3b2" stroke="#4b5260" /><path d="M1 1h4v7H1zM7 1h5v7H7z" fill="#fff" /></svg>
      </div>
      <Fit w={27} className="ml-[9px]">100%</Fit>
      <span className="ml-[10px] flex"><Zoom /></span>
      <div className="flex w-[102px] items-center">
        <div className="h-px w-[46px] bg-[#e5effc]" />
        <svg width="9" height="14" viewBox="0 0 9 14"><path d="M.5.500h8v9l-4 4-4-4z" fill="#f1f5fb" stroke="#3f5a87" /><path d="M4.500 3v6" stroke="#8296b6" /></svg>
        <div className="h-px grow bg-[#e5effc]" />
      </div>
      <Zoom plus />
    </div>
  </div>
);

export default function App() {
  return (
    <div className="flex h-[1050px] w-[1684px] overflow-hidden bg-[#d4e3f5] font-['Open_Sans',sans-serif] text-[12px] leading-[15px]">
      <div className="relative flex w-[1680px] shrink-0 flex-col">
        <OfficeButton />
        <TitleBar />
        <TabRow />
        <div className="flex h-[92px] shrink-0 border-b-2 border-[#87a7d2] bg-[#cfe2f7] px-px">
          <div className="flex h-[90px] w-[1678px] rounded-[3px] border border-[#8db2e3] bg-linear-to-b from-[#e2ecf8] via-[#cddcef] to-[#e3f3ff] pl-px pt-px">
            <Clipboard />
            <FontGroup />
            <Alignment />
            <NumberGroup />
            <Styles />
            <Cells />
            <Editing />
          </div>
        </div>
        <FormulaBar />
        <div className="h-[3px] shrink-0 bg-[#dce9f8]" />
        <div className="flex h-[843px] shrink-0">
          <div className="flex w-[1664px] shrink-0 flex-col">
            <ColumnHeads />
            <Sheet />
          </div>
          <VerticalScroll />
        </div>
        <SheetTabs />
        <StatusBar />
      </div>
      <div className="flex w-1 flex-col">
        <div className="h-[800px] bg-[#5b5fd0]" />
        <div className="grow bg-black" />
      </div>
    </div>
  );
}
